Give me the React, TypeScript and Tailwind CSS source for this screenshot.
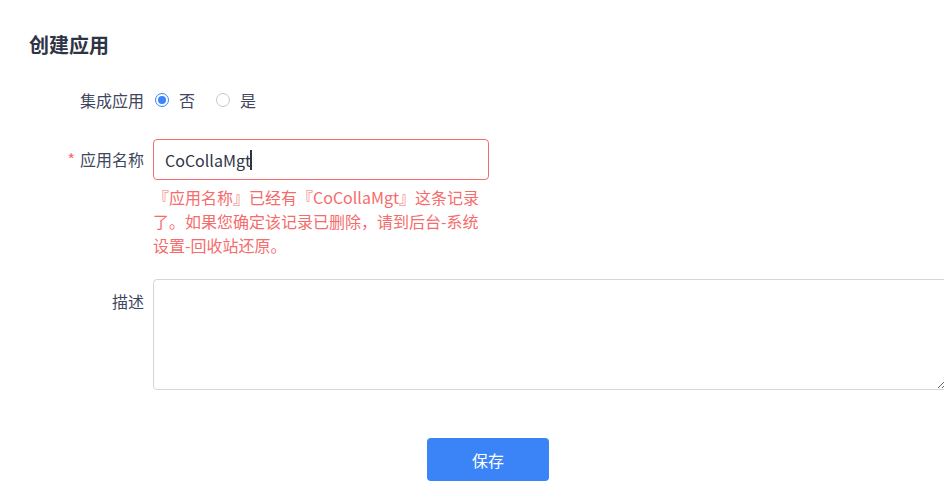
export default function App() {
  const font = { fontFamily: '"Noto Sans CJK SC", "Noto Sans", sans-serif' };
  return (
    <div
      className="w-[944px] h-[501px] overflow-hidden bg-white text-[#3f4660]"
      style={font}
    >
      <h1 className="pl-[29px] pt-[31px] text-[20px] leading-[28px] font-bold text-[#2f3445]">
        创建应用
      </h1>

      <div className="mt-[31px] grid grid-cols-[144px_1fr] gap-x-[9px] text-[16px]">
        {/* 集成应用 */}
        <div className="text-right leading-[20px]">集成应用</div>
        <div className="flex items-center h-[20px]">
          <label className="flex items-center ml-[2px]">
            <span className="w-[14px] h-[14px] rounded-full border border-[#3a84f7] flex items-center justify-center">
              <span className="w-[8px] h-[8px] rounded-full bg-[#3a84f7]" />
            </span>
            <span className="ml-[10px] leading-[20px]">否</span>
          </label>
          <label className="flex items-center ml-[21px]">
            <span className="w-[14px] h-[14px] rounded-full border border-[#c3c8d4] bg-white" />
            <span className="ml-[10px] leading-[20px]">是</span>
          </label>
        </div>

        {/* 应用名称 */}
        <div className="mt-[29px] text-right leading-[41px]">
          <span className="text-[#f56c6c] mr-[5px]">*</span>
          应用名称
        </div>
        <div className="mt-[29px]">
          <div className="w-[336px] h-[41px] rounded-[4px] border border-[#f56c6c] flex items-center pl-[11px] text-[16px] text-[#2f3445]">
            <span>CoCollaMgt</span>
            <span className="w-[2px] h-[20px] bg-[#2f3445] -ml-[1px]" />
          </div>
          <p className="w-[336px] mt-[5px] text-[16px] leading-[24px] text-[#f56c6c]">
            『应用名称』已经有『CoCollaMgt』这条记录了。如果您确定该记录已删除，请到后台-系统设置-回收站还原。
          </p>
        </div>

        {/* 描述 */}
        <div className="mt-[22px] pt-[10px] text-right leading-[24px]">描述</div>
        <div className="mt-[22px]">
          <textarea className="block w-[794px] h-[111px] rounded-[4px] border border-[#d3d6de] px-[11px] py-[10px] text-[16px] leading-[24px] outline-none resize-y" />
        </div>
      </div>

      <div className="mt-[48px] pl-[427px]">
        <button className="w-[122px] h-[43px] rounded-[4px] bg-[#3a84f7] text-white text-[16px]">
          保存
        </button>
      </div>
    </div>
  );
}
